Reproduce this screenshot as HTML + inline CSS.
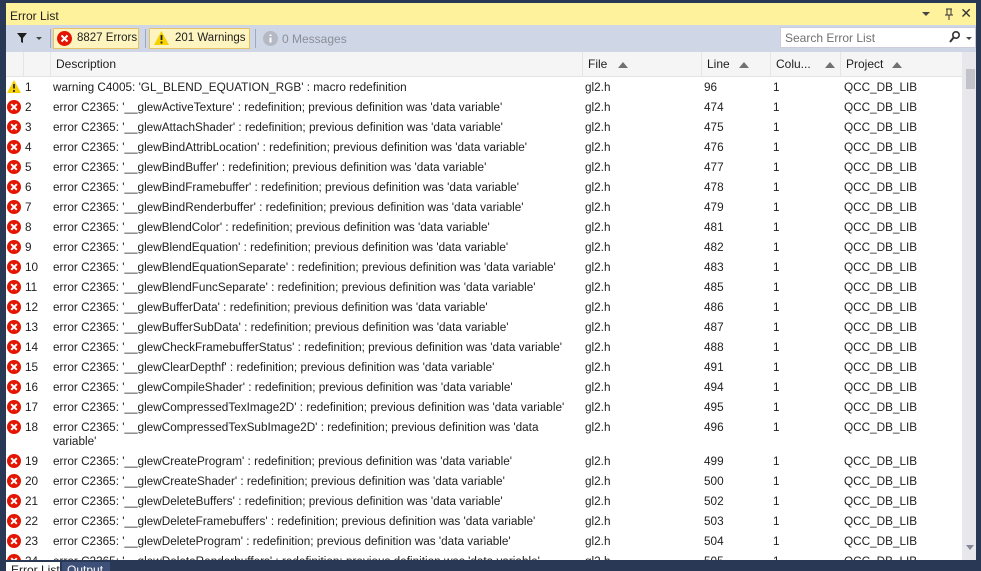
<!DOCTYPE html>
<html><head><style>
*{margin:0;padding:0;box-sizing:border-box}
body{width:981px;height:571px;background:#293955;position:relative;overflow:hidden;font-family:"Liberation Sans",sans-serif;font-size:12px;color:#1e1e1e}
.title{position:absolute;left:6px;top:3px;width:970px;height:22px;background:#fff29d;padding:6px 0 0 4px;font-size:12px}
.tb{position:absolute;left:6px;top:25px;width:970px;height:27px;background:#cfd6e5}
.panel{position:absolute;left:6px;top:52px;width:970px;height:508px;background:#fff;overflow:hidden}
.hdr{position:absolute;left:0;top:0;width:956px;height:25px;background:#f5f5f5;border-bottom:1px solid #e5e5e5}
.hdr div{position:absolute;top:0;height:25px;line-height:25px;border-left:1px solid #e5e5e5;padding-left:5px}
.row{position:absolute;left:0;width:956px;height:20px;line-height:22px;font-size:11.75px}
.row span{position:absolute;white-space:nowrap}
.sb{position:absolute;left:956px;top:0;width:17px;height:508px;background:#e8e8ec}
.btn{position:absolute;top:3px;height:21px;border:1px solid #e5c365;background:#fdf4bf;line-height:19px;padding-left:22px;white-space:nowrap;font-size:11.5px}
.tri{display:inline-block;width:0;height:0;border-left:5px solid transparent;border-right:5px solid transparent;border-bottom:6px solid #717171;vertical-align:middle;margin-left:9px}
</style></head><body>
<div class="title">Error List
<span style="position:absolute;right:46px;top:9px;border-left:4px solid transparent;border-right:4px solid transparent;border-top:4px solid #444"></span>
<svg style="position:absolute;right:23px;top:5px" width="8" height="12"><path d="M1 1H7M2 1V7H6V1M0 7H8M4 7V12" stroke="#333" fill="none" stroke-width="1"/></svg>
<span style="position:absolute;right:4px;top:2px;font-size:14px;color:#333">✕</span>
</div>
<div class="tb">
<svg style="position:absolute;left:11px;top:8px" width="10" height="10"><path d="M0 0H10L6 5V10L4 9V5Z" fill="#1e1e1e"/></svg>
<span style="position:absolute;left:30px;top:12px;border-left:3px solid transparent;border-right:3px solid transparent;border-top:3px solid #444"></span>
<div style="position:absolute;left:44px;top:4px;width:1px;height:19px;background:#a0a8bb"></div>
<div class="btn" style="left:47px;width:86px;padding-left:23px"><svg style="position:absolute;left:3px;top:2px" width="15" height="15"><circle cx="7.5" cy="7.5" r="7.5" fill="#e51400"/><path d="M4.5 4.5L10.5 10.5M10.5 4.5L4.5 10.5" stroke="#fff" stroke-width="2"/></svg>8827 Errors</div>
<div style="position:absolute;left:139px;top:4px;width:1px;height:19px;background:#a0a8bb"></div>
<div class="btn" style="left:143px;width:101px;padding-left:25px"><svg style="position:absolute;left:4px;top:2px" width="15" height="14"><path d="M7.5 0L15 14H0Z" fill="#f8d200"/><path d="M7.5 4V9M7.5 10.5V12.5" stroke="#1e1e1e" stroke-width="1.8"/></svg>201 Warnings</div>
<div style="position:absolute;left:249px;top:4px;width:1px;height:19px;background:#a0a8bb"></div>
<svg style="position:absolute;left:257px;top:6px" width="15" height="15"><circle cx="7.5" cy="7.5" r="7.5" fill="#b4b9c4"/><path d="M7.5 3.5V5M7.5 6.5V11.5" stroke="#fff" stroke-width="2"/></svg>
<span style="position:absolute;left:276px;top:7px;color:#8a8f9a">0 Messages</span>
<div style="position:absolute;left:774px;top:2px;width:196px;height:21px;background:#fff;border:1px solid #ccd;padding:3px 0 0 4px;color:#717171">Search Error List
<svg style="position:absolute;right:15px;top:3px" width="11" height="12"><circle cx="7" cy="4" r="3.2" fill="none" stroke="#333" stroke-width="1.6"/><path d="M5 6L1 11" stroke="#333" stroke-width="2"/></svg>
<span style="position:absolute;right:3px;top:9px;border-left:3px solid transparent;border-right:3px solid transparent;border-top:3px solid #444"></span></div>
</div>
<div class="panel">
<div class="hdr">
<div style="left:17px;width:27px"></div>
<div style="left:44px;width:532px">Description</div>
<div style="left:576px;width:119px">File<span class="tri" style="margin-left:11px"></span></div>
<div style="left:695px;width:69px">Line<span class="tri"></span></div>
<div style="left:764px;width:70px">Colu...<span class="tri" style="margin-left:14px"></span></div>
<div style="left:834px;width:122px">Project<span class="tri"></span></div>
</div>
<div id="rows"></div>
<div class="sb"><span style="position:absolute;left:4px;top:17px;border-left:4px solid transparent;border-right:4px solid transparent;border-bottom:5px solid #868999"></span><div style="position:absolute;left:4px;top:17px;width:9px;height:20px;background:#c2c3c9"></div><span style="position:absolute;left:4px;top:493px;border-left:4px solid transparent;border-right:4px solid transparent;border-top:5px solid #868999"></span></div>
</div>
<div style="position:absolute;left:6px;top:562px;width:54px;height:9px;background:#fff;padding-left:5px;line-height:16px;font-size:12px;overflow:hidden">Error List</div>
<div style="position:absolute;left:62px;top:562px;width:48px;height:9px;background:#3e5078;color:#fff;padding-left:5px;line-height:16px;overflow:hidden">Output</div>
<script>
var names=[["warning C4005: 'GL_BLEND_EQUATION_RGB' : macro redefinition","96"],
["ActiveTexture","474"],["AttachShader","475"],["BindAttribLocation","476"],["BindBuffer","477"],["BindFramebuffer","478"],["BindRenderbuffer","479"],["BlendColor","481"],["BlendEquation","482"],["BlendEquationSeparate","483"],["BlendFuncSeparate","485"],["BufferData","486"],["BufferSubData","487"],["CheckFramebufferStatus","488"],["ClearDepthf","491"],["CompileShader","494"],["CompressedTexImage2D","495"],["CompressedTexSubImage2D","496"],["CreateProgram","499"],["CreateShader","500"],["DeleteBuffers","502"],["DeleteFramebuffers","503"],["DeleteProgram","504"],["DeleteRenderbuffers","505"]];
var err='<svg style="position:absolute;left:1px;top:3px" width="14" height="14"><circle cx="7" cy="7" r="7" fill="#e51400"/><path d="M4.2 4.2L9.8 9.8M9.8 4.2L4.2 9.8" stroke="#fff" stroke-width="2"/></svg>';
var warn='<svg style="position:absolute;left:1px;top:3px" width="14" height="13"><path d="M7 0L14 13H0Z" fill="#f8d200"/><path d="M7 4V8.5M7 10V12" stroke="#1e1e1e" stroke-width="1.7"/></svg>';
var h='',y=25;
for(var i=0;i<names.length;i++){
 var d=i==0?names[0][0]:"error C2365: '__glew"+names[i][0]+"' : redefinition; previous definition was 'data variable'";
 var tall=i==17;
 if(tall) d="error C2365: '__glewCompressedTexSubImage2D' : redefinition; previous definition was 'data<br>variable'";
 h+='<div class="row" style="top:'+y+'px;height:'+(tall?34:20)+'px">'+(i==0?warn:err)+
 '<span style="left:19px">'+(i+1)+'</span><span style="left:47px;'+(tall?'line-height:14px;top:4px':'')+'">'+d+'</span><span style="left:579px">gl2.h</span><span style="left:698px">'+names[i][1]+'</span><span style="left:767px">1</span><span style="left:838px">QCC_DB_LIB</span></div>';
 y+=tall?34:20;
}
document.getElementById('rows').innerHTML=h;
</script>
</body></html>
